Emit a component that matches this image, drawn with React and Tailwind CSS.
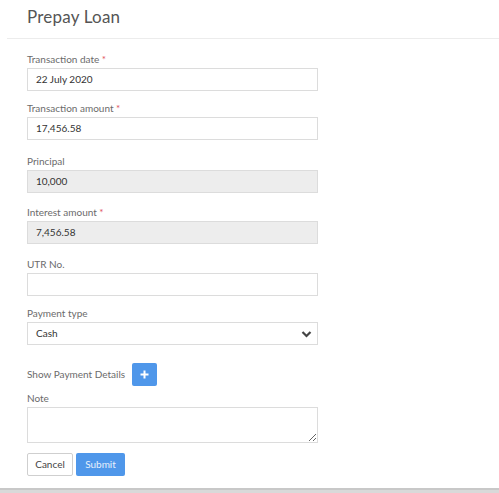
export default function App() {
  const font = { fontFamily: 'Lato, "Noto Sans", sans-serif' };
  const Label = ({ children, req }) => (
    <div className="text-[10px] leading-[10px] text-[#6b6b6b] mb-[4px]">
      {children}
      {req && <span className="text-[#e0525c]"> *</span>}
    </div>
  );
  const Input = ({ value, disabled }) => (
    <div
      className={`h-[23px] w-[291px] border border-[#dcdcdc] flex items-center pl-[8px] text-[10px] text-[#333] ${
        disabled ? "bg-[#ededed]" : "bg-white"
      }`}
    >
      {value}
    </div>
  );
  return (
    <div className="w-[499px] h-[493px] bg-white relative overflow-hidden" style={font}>
      <div className="ml-[7px] h-[39px] border-b border-[#ececec] pl-[20px] pt-[6px]">
        <div className="text-[17px] leading-[22px] text-[#555] tracking-[0.2px]">Prepay Loan</div>
      </div>
      <div className="pl-[27px]">
        <div className="mt-[15px]">
          <Label req>Transaction date</Label>
          <Input value="22 July 2020" />
        </div>
        <div className="mt-[12px]">
          <Label req>Transaction amount</Label>
          <Input value="17,456.58" />
        </div>
        <div className="mt-[16px]">
          <Label>Principal</Label>
          <Input value="10,000" disabled />
        </div>
        <div className="mt-[14px]">
          <Label req>Interest amount</Label>
          <Input value="7,456.58" disabled />
        </div>
        <div className="mt-[15px]">
          <Label>UTR No.</Label>
          <Input value="" />
        </div>
        <div className="mt-[12px]">
          <Label>Payment type</Label>
          <div className="h-[23px] w-[291px] border border-[#dcdcdc] flex items-center justify-between pl-[8px] pr-[5px] text-[10px] text-[#333] bg-white">
            <span>Cash</span>
            <svg width="11" height="8" viewBox="0 0 11 8">
              <path d="M1.5 2 L5.5 6 L9.5 2" fill="none" stroke="#444" strokeWidth="2.2" />
            </svg>
          </div>
        </div>
        <div className="mt-[18px] flex items-center h-[23px]">
          <span className="text-[10px] text-[#6b6b6b] mr-[7px]">Show Payment Details</span>
          <div className="w-[25px] h-[23px] rounded-[2px] bg-[#4f97ea] flex items-center justify-center">
            <svg width="9" height="9" viewBox="0 0 9 9">
              <path d="M4.5 0.5 V8.5 M0.5 4.5 H8.5" stroke="white" strokeWidth="2" />
            </svg>
          </div>
        </div>
        <div className="mt-[7px]">
          <Label>Note</Label>
          <textarea className="block h-[36px] w-[291px] border border-[#dcdcdc] bg-white outline-none" />
        </div>
        <div className="mt-[10px] flex gap-[3px]">
          <button className="h-[23px] w-[46px] border border-[#cfcfcf] rounded-[2px] bg-white text-[10px] text-[#444]">
            Cancel
          </button>
          <button className="h-[23px] w-[49px] rounded-[2px] bg-[#4f97ea] text-[10px] text-[#e8f1fc]">
            Submit
          </button>
        </div>
      </div>
      <div className="absolute left-0 right-0 bottom-0 h-[5px] bg-[#d9d9d9] border-t-2 border-[#c8c8c8]" />
    </div>
  );
}
